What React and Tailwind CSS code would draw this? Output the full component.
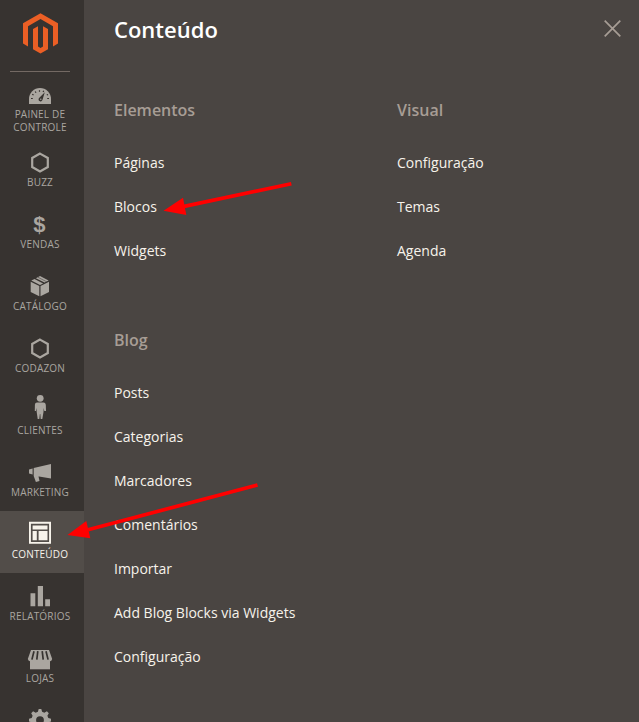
import React from "react";

const hexagon = (
  <path d="M14 6.6 21.8 11v9L14 24.4 6.2 20v-9Z" fill="none" stroke="currentColor" strokeWidth="2.2" />
);

const icons = {
  dashboard: (
    <>
      <path d="M3 24v-5a11 11 0 0 1 22 0v5Z" />
      <g className="stroke-[#373330]" strokeWidth="1.2" fill="none">
        <path d="M5 18.5h1.8M6.2 14.2l1.4.8M9.2 11.5l.8 1.3M13.5 10.2v1.5M17.7 10.8l-.6 1.3M23 18.5h-1.8M22 14.4l-1.2.7" />
      </g>
      <path className="fill-[#373330]" d="m18.8 12.2-2.3 7.6a2 2 0 1 1-3.2-2Z" />
      <circle cx="14.8" cy="19.3" r=".7" />
    </>
  ),
  hexagon,
  dollar: (
    <text x="13.5" y="22.6" textAnchor="middle" fontSize="22" fontWeight="700" fontFamily="Liberation Sans, sans-serif">$</text>
  ),
  box: (
    <>
      <path d="M4.7 10.8 13.3 15v10.3L4.7 21ZM14.5 15 23 10.8V21l-8.5 4.3Z" />
      <path d="m5.3 9.6 3.2-1.6 8.6 4.4-3.1 1.6ZM9.9 7.2 14 5l8.6 4.6-4.1 2Z" />
      <path d="m11.8 6.2 8.7 4.5" className="stroke-[#373330]" strokeWidth=".5" />
    </>
  ),
  person: (
    <>
      <circle cx="14.2" cy="3.3" r="3.4" />
      <path d="M11 7.5h6.5q2 0 2.3 2.2l.2 6.3h-1.7l-.6-3-.2 4-1.2 7h-1.6l-.4-5-.4 0-.6 5h-1.6l-1-7-.3-4-.5 3H8.8l.1-6.3Q9 7.5 11 7.5Z" />
    </>
  ),
  megaphone: (
    <>
      <path d="M7.7 11 25 7v14.5L13 19.4l-.5.1 1 4.6-3.6.8-2.2-6Z" />
      <path d="M3 12.4l3.6-1v6L3 16.5Z" />
    </>
  ),
  layout: (
    <>
      <path fillRule="evenodd" d="M3 2.8h22v22H3Zm1.9 1.9v18.2h18.2V4.7Z" />
      <path d="M6.6 6.5h14.9v4H6.6ZM6.6 12h4.2v9.2H6.6ZM12.6 12h8.9v9.2h-8.9Z" />
    </>
  ),
  bars: <path d="M4.5 12.2h4.8v13H4.5ZM11.8 5h5.2v20.2h-5.2ZM19.2 18.2H24v7h-4.8Z" />,
  store: (
    <>
      <path d="M4 17h20v9.3H4Z" />
      <path d="M5 7h18l3.2 9q-.5 2.5-2.8 2.4-1.5 0-2.3-1.3H6.9q-.8 1.3-2.3 1.3-2.3 0-2.8-2.4Z" />
      <path className="stroke-[#373330]" strokeWidth="1.7" d="m8 8.2-2.1 8.4M11.8 8.2l-1 8.4M16.2 8.2l1 8.4M20 8.2l2.1 8.4" />
    </>
  ),
  gear: (
    <path
      fillRule="evenodd"
      d="m12.7 4h2.6l.8 2.8 2.2.9 2.6-1.4 1.9 1.9-1.4 2.6.9 2.2 2.7.8v2.7l-2.7.8-.9 2.2 1.4 2.6-1.9 1.9-2.6-1.4-2.2.9-.8 2.7h-2.6l-.8-2.7-2.2-.9-2.6 1.4-1.9-1.9 1.4-2.6-.9-2.2L3 16.5v-2.7l2.7-.8.9-2.2-1.4-2.6 1.9-1.9 2.6 1.4 2.2-.9ZM14 11.2a3.9 3.9 0 1 0 0 7.8 3.9 3.9 0 0 0 0-7.8Z"
    />
  ),
};

const menu = [
  ["hexagon", "Buzz"],
  ["dollar", "Vendas"],
  ["box", "Catálogo"],
  ["hexagon", "Codazon"],
  ["person", "Clientes"],
  ["megaphone", "Marketing"],
  ["layout", "Conteúdo"],
  ["bars", "Relatórios"],
  ["store", "Lojas"],
  ["gear", ""],
];

function Icon({ name }) {
  return (
    <svg className="block size-7 shrink-0 overflow-visible" viewBox="0 0 28 28" fill="currentColor">
      {icons[name]}
    </svg>
  );
}

function MenuItem({ icon, label, active }) {
  return (
    <a
      className={
        "flex h-[62px] shrink-0 flex-col items-center pt-2 pr-1 text-[10px] leading-[13px] tracking-[0.2px] uppercase " +
        (active ? "bg-[#524d49] text-[#f7f3eb]" : "text-[#aaa6a0]")
      }
    >
      <Icon name={icon} />
      <span className="mt-px whitespace-nowrap">{label}</span>
    </a>
  );
}

function Group({ title, links }) {
  return (
    <section>
      <h3 className="text-base leading-[22px] font-semibold text-[#a79d95]">{title}</h3>
      <ul className="mt-5 text-sm leading-5 text-[#f7f3eb]">
        {links.map((link) => (
          <li key={link} className="flex h-11 items-center">{link}</li>
        ))}
      </ul>
    </section>
  );
}

function Arrow({ from, to, base }) {
  return (
    <>
      <path d={`M${from}L${to}`} stroke="#f00" strokeWidth="3.7" />
      <path d={`M${base}Z`} fill="#f00" />
    </>
  );
}

export default function App() {
  return (
    <div className="relative flex h-[722px] w-[639px] overflow-hidden bg-[#4a4542] font-['Open_Sans',sans-serif]">
      <nav className="flex w-[84px] shrink-0 flex-col overflow-hidden bg-[#373330]">
        <div className="flex h-[71px] shrink-0 justify-center pt-[13px] pr-[3px]">
          <svg className="h-[41px] w-[35px]" viewBox="0 0 35 41" fill="#eb5f25">
            <path d="M17.5.2 35 10.3v20.2l-5 2.9V13.2L17.5 6 5 13.2v20.2l-5-2.9V10.3Z" />
            <path d="M10 16.1 15 13.2v20.3l2.5 1.5 2.5-1.5V13.2l5 2.9v20.2l-7.5 4.3-7.5-4.3Z" />
          </svg>
        </div>
        <div className="mr-[14px] ml-[10px] h-px shrink-0 bg-[#736963]" />
        <a className="flex h-[67px] shrink-0 flex-col items-center pt-2 pr-1 text-center text-[10px] leading-[13px] tracking-[0.2px] text-[#aaa6a0] uppercase">
          <Icon name="dashboard" />
          <span>Painel de<br />controle</span>
        </a>
        {menu.map(([icon, label], i) => (
          <MenuItem key={i} icon={icon} label={label} active={label === "Conteúdo"} />
        ))}
      </nav>

      <main className="flex-1 pl-[30px]">
        <header className="flex h-[99px] items-start justify-between pt-[14px] pr-[18px]">
          <h2 className="text-[22px] leading-[30px] font-semibold text-white">Conteúdo</h2>
          <svg className="mt-[6px] size-[17px]" viewBox="0 0 17 17" fill="none" stroke="#a79d95" strokeWidth="1.7">
            <path d="m.7.7 15.6 15.6M16.3.7.7 16.3" />
          </svg>
        </header>
        <div className="grid grid-cols-[283px_1fr] gap-y-14">
          <Group title="Elementos" links={["Páginas", "Blocos", "Widgets"]} />
          <Group title="Visual" links={["Configuração", "Temas", "Agenda"]} />
          <Group
            title="Blog"
            links={["Posts", "Categorias", "Marcadores", "Comentários", "Importar", "Add Blog Blocks via Widgets", "Configuração"]}
          />
        </div>
      </main>

      <svg className="pointer-events-none absolute inset-0 h-full w-full" viewBox="0 0 639 722">
        <Arrow from="291.3 183.8" to="183 206.6" base="163.5 210.7 183 197.7 186.3 215" />
        <Arrow from="257.5 485" to="88 529.8" base="67.5 535 86.3 521 90.3 538.3" />
      </svg>
    </div>
  );
}
